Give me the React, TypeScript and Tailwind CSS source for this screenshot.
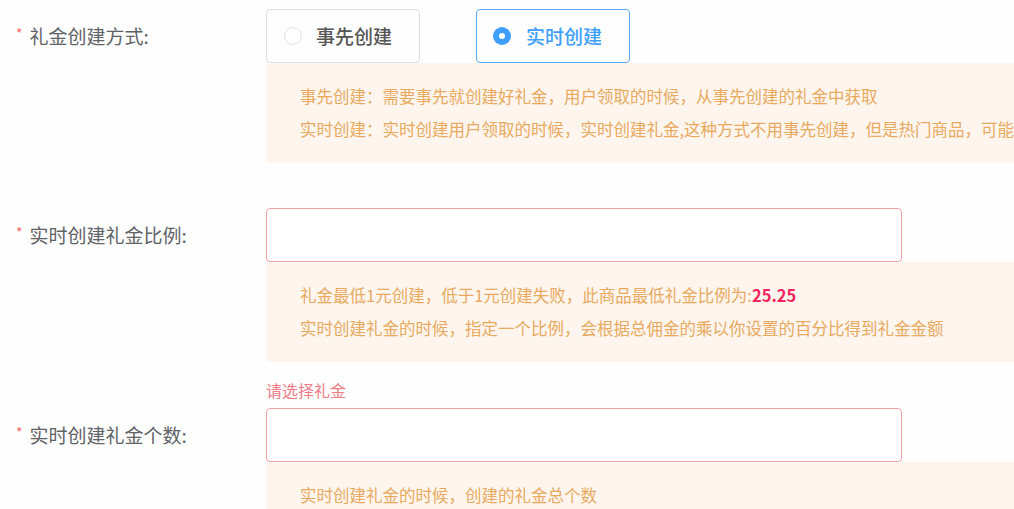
import React from 'react';

const font = { fontFamily: '"Noto Sans CJK SC", "Noto Sans", sans-serif' };

const Label: React.FC<{ text: string }> = ({ text }) => (
  <div className="w-[266px] shrink-0 h-[54px] flex items-center pl-[16px] text-[19px] text-[#606266]">
    <span className="text-[#f56c6c] text-[14px] mr-[7px] -mt-[5px]">*</span>
    <span>{text}</span>
  </div>
);

const Tip: React.FC<{ children: React.ReactNode }> = ({ children }) => (
  <div className="w-[900px] rounded bg-[#fdf5ee] pl-[34px] py-[17px] text-[16.5px] leading-[33px] text-[#e9aa5e] whitespace-nowrap">
    {children}
  </div>
);

const Radio: React.FC<{ text: string; checked?: boolean }> = ({ text, checked }) => (
  <div
    className={
      checked
        ? 'w-[154px] h-[54px] rounded border border-[#5aa9f7] flex items-center pl-4 gap-[15px]'
        : 'w-[154px] h-[54px] rounded border border-[#dcdfe6] flex items-center pl-[17px] gap-[14px]'
    }
  >
    {checked ? (
      <span className="w-[18px] h-[18px] rounded-full bg-[#409eff] flex items-center justify-center">
        <span className="w-[6px] h-[6px] rounded-full bg-white" />
      </span>
    ) : (
      <span className="w-[18px] h-[18px] rounded-full border border-[#dcdfe6] bg-white" />
    )}
    <span className={checked ? 'text-[19px] font-medium text-[#409eff]' : 'text-[19px] font-medium text-[#555]'}>
      {text}
    </span>
  </div>
);

const Input = () => (
  <div className="w-[636px] h-[54px] rounded border-[1.5px] border-[#f2a1a9] bg-white" />
);

export default function App() {
  return (
    <div className="w-[1014px] h-[509px] overflow-hidden bg-[#fefefe] pt-[9px]" style={font}>
      <div className="flex">
        <Label text="礼金创建方式:" />
        <div className="flex flex-col">
          <div className="flex gap-[56px]">
            <Radio text="事先创建" />
            <Radio text="实时创建" checked />
          </div>
          <Tip>
            <div>事先创建：需要事先就创建好礼金，用户领取的时候，从事先创建的礼金中获取</div>
            <div>实时创建：实时创建用户领取的时候，实时创建礼金,这种方式不用事先创建，但是热门商品，可能会出现创建失败的情况</div>
          </Tip>
        </div>
      </div>

      <div className="flex mt-[45px]">
        <Label text="实时创建礼金比例:" />
        <div className="flex flex-col">
          <Input />
          <Tip>
            <div>
              礼金最低1元创建，低于1元创建失败，此商品最低礼金比例为:
              <span className="font-bold text-[#f5245e]">25.25</span>
            </div>
            <div>实时创建礼金的时候，指定一个比例，会根据总佣金的乘以你设置的百分比得到礼金金额</div>
          </Tip>
          <div className="mt-[16px] text-[16px] leading-[24px] text-[#f07c87]">请选择礼金</div>
        </div>
      </div>

      <div className="flex mt-[6px]">
        <Label text="实时创建礼金个数:" />
        <div className="flex flex-col">
          <Input />
          <Tip>
            <div>实时创建礼金的时候，创建的礼金总个数</div>
          </Tip>
        </div>
      </div>
    </div>
  );
}
